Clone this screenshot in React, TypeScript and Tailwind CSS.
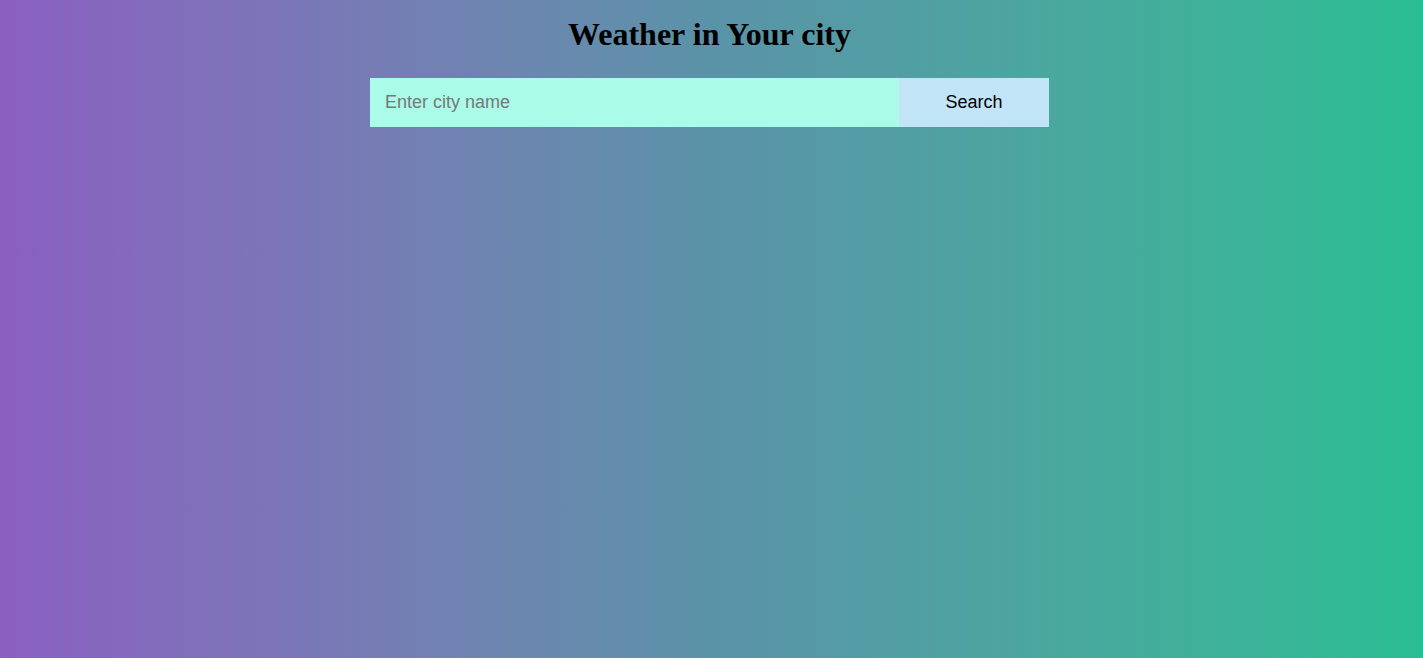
export default function App() {
  return (
    <div className="w-full h-[658px] overflow-hidden bg-gradient-to-r from-[#8a5fc1] via-[#5a93a8] to-[#28bd92]">
      <div className="flex flex-col items-center pt-[16px] pr-[4px]">
        <h1 className="text-[32px] font-bold text-black leading-[37px]" style={{ fontFamily: '"Liberation Serif", "Times New Roman", serif' }}>
          Weather in Your city
        </h1>
        <div className="flex mt-[25px]" style={{ fontFamily: '"Liberation Sans", Arial, sans-serif' }}>
          <input
            type="text"
            placeholder="Enter city name"
            className="w-[529px] h-[49px] bg-[#aafce9] px-[15px] text-[18px] text-black placeholder:text-[#777777] outline-none border-0"
          />
          <button className="w-[150px] h-[49px] bg-[#c1e5f6] text-[18px] text-black">Search</button>
        </div>
      </div>
    </div>
  );
}
